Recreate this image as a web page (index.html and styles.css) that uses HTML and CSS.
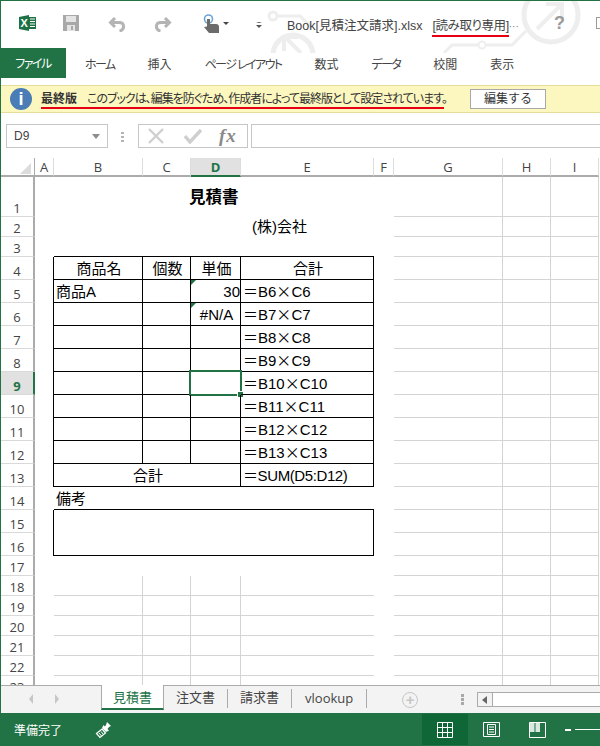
FILE: index.html
```html
<!DOCTYPE html>
<html lang="ja">
<head>
    <meta charset="UTF-8">
    <title>Book[見積注文請求].xlsx</title>
    <link rel="stylesheet" href="styles.css">
</head>
<body>
<div class="app">

    <!-- title bar -->
    <div class="titlebar">
        <svg class="watermark" width="600" height="52" viewBox="0 0 600 52" fill="none" stroke="#eeeeee" stroke-width="3">
            <circle cx="551" cy="14" r="27" stroke-width="5"/>
            <path d="M537 28 L561 4 M546 3 H562 V19" stroke-width="4"/>
            <path d="M526 30 L512 44 H486 M478 44 H452 L444 52"/>
            <circle cx="482" cy="44" r="3.5" stroke-width="2"/>
            <circle cx="293" cy="54" r="20" stroke-width="5"/>
            <path d="M301 52 L285 36 M284 50 V36 H298" stroke-width="4"/>
            <circle cx="273" cy="15" r="4"/>
            <path d="M277 15 H300 L312 27"/>
        </svg>
        <svg class="qat-icon xl" width="17" height="16" viewBox="0 0 17 16">
            <path d="M0 2 L10 0 V16 L0 14 Z" fill="#1e7145"/>
            <rect x="10" y="2" width="7" height="12" fill="#1e7145"/>
            <path d="M11 4 H16 M11 6.5 H16 M11 9 H16 M11 11.5 H16" stroke="#fff" stroke-width="1"/>
            <text x="1.5" y="12" class="xl-letter">X</text>
        </svg>
        <svg class="qat-icon save" width="16" height="16" viewBox="0 0 16 16">
            <path d="M0 0 H16 V16 H0 Z" fill="#a8a8a8"/>
            <rect x="3" y="1" width="10" height="6" fill="#e4e4e4"/>
            <rect x="4" y="10" width="8" height="6" fill="#e4e4e4"/>
            <rect x="8" y="11" width="2" height="4" fill="#a8a8a8"/>
        </svg>
        <svg class="qat-icon undo" width="18" height="16" viewBox="0 0 18 16" fill="none" stroke="#b4b4b4" stroke-width="3">
            <path d="M7 2 L2.5 6.5 L7 11"/>
            <path d="M3 6.5 H11 C17 6.5 17 14 11.5 15"/>
        </svg>
        <svg class="qat-icon redo" width="18" height="16" viewBox="0 0 18 16" fill="none" stroke="#b4b4b4" stroke-width="3">
            <path d="M11 2 L15.5 6.5 L11 11"/>
            <path d="M15 6.5 H7 C1 6.5 1 14 6.5 15"/>
        </svg>
        <svg class="qat-icon touch" width="18" height="19" viewBox="0 0 18 19">
            <circle cx="5.5" cy="5" r="4" fill="none" stroke="#6fa3d8" stroke-width="1.6"/>
            <path d="M4 5 H7 V10 H13 C15 10 16 11 16 13 V19 H6 L1 13 L4 12.5 Z" fill="#6b6b6b"/>
        </svg>
        <span class="caret"></span>
        <span class="customize"></span>
        <div class="doc-title">Book[見積注文請求].xlsx&nbsp;&nbsp;<span class="readonly">[読み取り専用]</span><span class="more">···</span></div>
        <span class="help">?</span>
        <span class="ribbon-opt"></span>
    </div>

    <!-- ribbon tabs -->
    <div class="tabs">
        <div class="tab-file">ファイル</div>
        <div class="tab-list">
            <span class="kana">ホーム</span>
            <span>挿入</span>
            <span class="kana">ページ レイアウト</span>
            <span>数式</span>
            <span class="kana">データ</span>
            <span>校閲</span>
            <span>表示</span>
        </div>
    </div>

    <!-- message bar -->
    <div class="msgbar">
        <span class="info-icon">i</span>
        <div class="msg-text"><b>最終版</b><span class="msg-body">このブックは、編集を防ぐため、作成者によって最終版として設定されています。</span></div>
        <div class="msg-btn">編集する</div>
    </div>

    <!-- formula bar -->
    <div class="formulabar">
        <div class="namebox"><span>D9</span><i class="name-caret"></i></div>
        <div class="fb-dots"></div>
        <div class="fb-buttons">
            <svg width="16" height="16" viewBox="0 0 16 16" fill="none" stroke="#cfcfcf" stroke-width="2.4"><path d="M1 1 L15 15 M15 1 L1 15"/></svg>
            <svg width="18" height="16" viewBox="0 0 18 16" fill="none" stroke="#cfcfcf" stroke-width="3.4"><path d="M1 8 L6 14 L17 2"/></svg>
            <span class="fx">fx</span>
        </div>
        <div class="fb-input"></div>
    </div>

    <!-- sheet -->
    <div class="sheet">
        <table class="grid">
            <colgroup>
                <col class="w-rh"><col class="w-a"><col class="w-b"><col class="w-c"><col class="w-d"><col class="w-e"><col class="w-f"><col class="w-g"><col class="w-h"><col class="w-i">
            </colgroup>
            <tr class="col-head">
                <th class="corner"><i></i></th><th>A</th><th>B</th><th>C</th><th class="sel">D</th><th>E</th><th>F</th><th>G</th><th>H</th><th>I</th>
            </tr>
            <tr class="r40"><th class="rh">1</th><td></td><td></td><td></td><td class="title">見積書</td><td></td><td></td><td class="g"></td><td class="g"></td><td class="g"></td></tr>
            <tr class="r20"><th class="rh">2</th><td></td><td></td><td></td><td></td><td class="company">(株)会社</td><td></td><td class="g"></td><td class="g"></td><td class="g"></td></tr>
            <tr class="r20"><th class="rh">3</th><td></td><td class="u"></td><td class="u"></td><td class="u"></td><td class="u"></td><td></td><td class="g"></td><td class="g"></td><td class="g"></td></tr>
            <tr class="r23"><th class="rh">4</th><td class="e"></td><td class="c mid">商品名</td><td class="c mid">個数</td><td class="c mid">単価</td><td class="c mid">合計</td><td></td><td class="g"></td><td class="g"></td><td class="g"></td></tr>
            <tr class="r23"><th class="rh">5</th><td class="e"></td><td class="c">商品A</td><td class="c"></td><td class="c num"><i class="flag"></i>30</td><td class="c">＝B6<span class="op">×</span>C6</td><td></td><td class="g"></td><td class="g"></td><td class="g"></td></tr>
            <tr class="r23"><th class="rh">6</th><td class="e"></td><td class="c"></td><td class="c"></td><td class="c mid"><i class="flag"></i>#N/A</td><td class="c">＝B7<span class="op">×</span>C7</td><td></td><td class="g"></td><td class="g"></td><td class="g"></td></tr>
            <tr class="r23"><th class="rh">7</th><td class="e"></td><td class="c"></td><td class="c"></td><td class="c"></td><td class="c">＝B8<span class="op">×</span>C8</td><td></td><td class="g"></td><td class="g"></td><td class="g"></td></tr>
            <tr class="r23"><th class="rh">8</th><td class="e"></td><td class="c"></td><td class="c"></td><td class="c"></td><td class="c">＝B9<span class="op">×</span>C9</td><td></td><td class="g"></td><td class="g"></td><td class="g"></td></tr>
            <tr class="r23"><th class="rh active">9</th><td class="e"></td><td class="c"></td><td class="c"></td><td class="c current"><i class="selection"></i><i class="handle"></i></td><td class="c">＝B10<span class="op">×</span>C10</td><td></td><td class="g"></td><td class="g"></td><td class="g"></td></tr>
            <tr class="r23"><th class="rh">10</th><td class="e"></td><td class="c"></td><td class="c"></td><td class="c"></td><td class="c">＝B11<span class="op">×</span>C11</td><td></td><td class="g"></td><td class="g"></td><td class="g"></td></tr>
            <tr class="r23"><th class="rh">11</th><td class="e"></td><td class="c"></td><td class="c"></td><td class="c"></td><td class="c">＝B12<span class="op">×</span>C12</td><td></td><td class="g"></td><td class="g"></td><td class="g"></td></tr>
            <tr class="r23"><th class="rh">12</th><td class="e"></td><td class="c"></td><td class="c"></td><td class="c"></td><td class="c">＝B13<span class="op">×</span>C13</td><td></td><td class="g"></td><td class="g"></td><td class="g"></td></tr>
            <tr class="r23"><th class="rh">13</th><td class="e"></td><td class="c mid" colspan="3">合計</td><td class="c sum">＝SUM(D5:D12)</td><td></td><td class="g"></td><td class="g"></td><td class="g"></td></tr>
            <tr class="r23"><th class="rh">14</th><td></td><td class="u">備考</td><td class="u"></td><td class="u"></td><td class="u"></td><td></td><td class="g"></td><td class="g"></td><td class="g"></td></tr>
            <tr class="r23"><th class="rh">15</th><td class="e"></td><td class="c" colspan="4" rowspan="2"></td><td></td><td class="g"></td><td class="g"></td><td class="g"></td></tr>
            <tr class="r23"><th class="rh">16</th><td class="e"></td><td></td><td class="g"></td><td class="g"></td><td class="g"></td></tr>
            <tr class="r20"><th class="rh">17</th><td></td><td></td><td></td><td></td><td></td><td></td><td class="g"></td><td class="g"></td><td class="g"></td></tr>
            <tr class="r20"><th class="rh">18</th><td></td><td class="l"></td><td class="l"></td><td class="l"></td><td class="lb"></td><td></td><td class="g"></td><td class="g"></td><td class="g"></td></tr>
            <tr class="r20"><th class="rh">19</th><td></td><td class="l"></td><td class="l"></td><td class="l"></td><td class="lb"></td><td></td><td class="g"></td><td class="g"></td><td class="g"></td></tr>
            <tr class="r20"><th class="rh">20</th><td></td><td class="l"></td><td class="l"></td><td class="l"></td><td class="lb"></td><td></td><td class="g"></td><td class="g"></td><td class="g"></td></tr>
            <tr class="r20"><th class="rh">21</th><td></td><td class="l"></td><td class="l"></td><td class="l"></td><td class="lb"></td><td></td><td class="g"></td><td class="g"></td><td class="g"></td></tr>
            <tr class="r20"><th class="rh">22</th><td></td><td class="l"></td><td class="l"></td><td class="l"></td><td class="lb"></td><td></td><td class="g"></td><td class="g"></td><td class="g"></td></tr>
            <tr class="r20"><th class="rh">23</th><td></td><td class="l"></td><td class="l"></td><td class="l"></td><td class="lb"></td><td></td><td class="g"></td><td class="g"></td><td class="g"></td></tr>
        </table>
    </div>

    <!-- sheet tabs -->
    <div class="sheetbar">
        <div class="sheet-nav"><i class="nav-l"></i><i class="nav-r"></i></div>
        <div class="sheet-tab on">見積書</div>
        <div class="sheet-tab">注文書</div>
        <div class="sheet-tab">請求書</div>
        <div class="sheet-tab latin">vlookup</div>
        <div class="add-sheet">+</div>
        <div class="bar-dots"></div>
        <div class="hscroll"><span class="hscroll-btn"><i></i></span></div>
    </div>

    <!-- status bar -->
    <div class="statusbar">
        <span class="ready">準備完了</span>
        <svg class="macro" width="18" height="18" viewBox="0 0 18 18">
            <path d="M12 1 L16 5 L14 6 L12.5 8 L14 9.5 L11 11 L7 7 L8.5 4 L10 5.5 L11 4 Z" fill="#fff"/>
            <path d="M1.5 12.5 L7 8 L10.5 12 L5 16.5 Z" fill="#217346" stroke="#fff" stroke-width="1.2"/>
            <path d="M4 12 L6.5 15 M6 10.5 L8.5 13.5" stroke="#fff" stroke-width="1"/>
        </svg>
        <div class="views">
            <div class="view on">
                <svg width="16" height="16" viewBox="0 0 16 16" fill="none" stroke="#fff"><path d="M.5 .5 H15.5 V15.5 H.5 Z M5.5 .5 V15.5 M10.5 .5 V15.5 M.5 5.5 H15.5 M.5 10.5 H15.5"/></svg>
            </div>
            <div class="view">
                <svg width="17" height="15" viewBox="0 0 17 15" fill="none" stroke="#fff"><path d="M.5 .5 H16.5 V14.5 H.5 Z M4.5 2.5 H12.5 V12.5 H4.5 Z M6 5 H11 M6 7.5 H11 M6 10 H11"/></svg>
            </div>
            <div class="view">
                <svg width="17" height="16" viewBox="0 0 17 16"><path d="M.5 .5 H16.5 V15.5 H.5 Z" fill="none" stroke="#fff"/><path d="M1 1 H5.5 V10 H1 Z M6.5 1 H11 V10 H6.5 Z" fill="#d9e9df"/></svg>
            </div>
        </div>
        <div class="zoomer"><i class="minus"></i><i class="track"></i></div>
    </div>
</div>
</body>
</html>
```

FILE: styles.css
```css
* {
    box-sizing: border-box;
}
html, body {
    margin: 0;
    padding: 0;
}
body {
    width: 600px;
    height: 746px;
    overflow: hidden;
    background: #fff;
    font-family: "Liberation Sans", "Noto Sans CJK JP", sans-serif;
    color: #222;
}
.app {
    width: 600px;
    height: 746px;
    display: flex;
    flex-direction: column;
    border-top: 1px solid #217346;
    border-left: 1px solid #217346;
    overflow: hidden;
}

/* title bar */
.titlebar {
    position: relative;
    height: 47px;
    flex: none;
    display: flex;
    align-items: center;
    font-size: 13px;
}
.watermark {
    position: absolute;
    left: -1px;
    top: 0;
}
.titlebar > *:not(.watermark) {
    position: relative;
}
.qat-icon {
    flex: none;
}
.xl {
    margin-left: 18px;
    margin-top: -4px;
}
.xl-letter {
    font: bold 11px "Liberation Sans", sans-serif;
    fill: #fff;
}
.save {
    margin-left: 27px;
    margin-top: -3px;
}
.undo {
    margin-left: 29px;
    margin-top: -1px;
}
.redo {
    margin-left: 28px;
    margin-top: -1px;
}
.touch {
    margin-left: 31px;
    margin-top: -3px;
}
.caret {
    width: 0;
    height: 0;
    margin-left: 2px;
    margin-top: -3px;
    border: 3px solid transparent;
    border-top: 3px solid #444;
    border-bottom: 0;
}
.customize {
    width: 6px;
    height: 5px;
    margin-left: 27px;
    margin-top: -1px;
    border-top: 1px solid #555;
    border-left: 3px solid transparent;
    border-right: 3px solid transparent;
}
.customize::after {
    content: "";
    display: block;
    width: 0;
    height: 0;
    margin: 2px 0 0 -3px;
    border: 3px solid transparent;
    border-top: 3px solid #555;
    border-bottom: 0;
}
.doc-title {
    margin-left: 25px;
    font-size: 12.5px;
    color: #444;
    white-space: nowrap;
    width: 238px;
    margin-top: 3px;
    font-feature-settings: "palt";
}
.readonly {
    display: inline-block;
    margin-left: 3px;
    border-bottom: 2px solid #e60012;
    line-height: 17px;
    letter-spacing: -0.4px;
}
.more {
    color: #777;
    font-size: 10px;
}
.help {
    margin-left: 30px;
    font: bold 18px "Liberation Sans", sans-serif;
    color: #9a9a9a;
    margin-top: -2px;
}
.ribbon-opt {
    margin-left: 31px;
    width: 4px;
    height: 12px;
    border: 1px solid #999;
    border-right: 0;
    margin-top: -3px;
}

/* ribbon tabs */
.tabs {
    height: 30px;
    flex: none;
    display: flex;
    align-items: center;
    position: relative;
    margin-left: -1px;
    font-size: 12px;
    font-feature-settings: "palt";
}
.tab-file {
    width: 66px;
    height: 30px;
    line-height: 32px;
    text-align: center;
    background: #217346;
    color: #fff;
    letter-spacing: -1.5px;
}
.tab-list {
    display: flex;
    gap: 33px;
    margin-left: 19px;
    color: #444;
}
.kana {
    letter-spacing: -1.6px;
}

/* message bar */
.msgbar {
    height: 28px;
    flex: none;
    margin: 7px 0 0 -1px;
    display: flex;
    align-items: center;
    background: #fcf7bf;
    border-top: 1px solid #e7dd9b;
    border-bottom: 1px solid #e7dd9b;
    font-size: 12px;
    color: #333;
}
.info-icon {
    width: 22px;
    height: 22px;
    margin-left: 10px;
    border-radius: 50%;
    background: #4a7db5;
    color: #fff;
    font: bold 18px/22px "Liberation Sans", sans-serif;
    text-align: center;
}
.msg-text {
    margin-left: 9px;
    border-bottom: 2px solid #e60012;
    line-height: 15px;
    white-space: nowrap;
    width: 403px;
    margin-top: 2px;
    font-feature-settings: "palt";
}
.msg-body {
    margin-left: 10px;
    letter-spacing: -1px;
}
.msg-btn {
    width: 76px;
    height: 20px;
    margin-left: 26px;
    background: #fff;
    border: 1px solid #a9a9a9;
    line-height: 18px;
    text-align: center;
}

/* formula bar */
.formulabar {
    height: 24px;
    flex: none;
    margin-top: 11px;
    display: flex;
    align-items: stretch;
    font-size: 12px;
}
.namebox {
    width: 102px;
    margin-left: 5px;
    padding: 0 7px;
    border: 1px solid #c6c6c6;
    display: flex;
    align-items: center;
    justify-content: space-between;
    color: #444;
}
.name-caret {
    border: 4px solid transparent;
    border-top: 5px solid #8c8c8c;
    border-bottom: 0;
}
.fb-dots {
    width: 3px;
    height: 10px;
    margin: 8px 14px 0 13px;
    background: repeating-linear-gradient(#b4b4b4 0 2px, transparent 2px 4px);
}
.fb-buttons {
    width: 110px;
    border: 1px solid #c6c6c6;
    display: flex;
    align-items: center;
    gap: 20px;
    padding-left: 9px;
}
.fx {
    font: italic bold 19px "Liberation Serif", serif;
    color: #8a8a8a;
    margin-left: -3px;
    letter-spacing: 1px;
}
.fb-input {
    flex: 1;
    margin-left: 3px;
    border: 1px solid #c6c6c6;
    border-right: 0;
}

/* sheet */
.sheet {
    flex: none;
    height: 527px;
    margin-top: 10px;
    overflow: hidden;
    font-size: 15px;
    color: #000;
}
.grid {
    border-collapse: separate;
    border-spacing: 0;
    table-layout: fixed;
    width: 598px;
}
.w-rh { width: 34px; }
.w-a { width: 19px; }
.w-b { width: 89px; }
.w-c { width: 48px; }
.w-d { width: 50px; }
.w-e { width: 133px; }
.w-f { width: 20px; }
.w-g { width: 109px; }
.w-h { width: 48px; }
.w-i { width: 48px; }
.grid td, .grid th {
    padding: 0;
    overflow: visible;
    white-space: nowrap;
    font-weight: normal;
}
.grid td {
    vertical-align: bottom;
    line-height: 20px;
    padding-left: 2px;
}
.col-head { height: 19px; }
.r40 { height: 40px; }
.r20 { height: 20px; }
.r23 { height: 23px; }
.col-head th {
    border-bottom: 2px solid #ababab;
    border-right: 1px solid #dcdcdc;
    font: 13px/16px "Open Sans", sans-serif;
    color: #444;
    vertical-align: middle;
}
.col-head th.sel {
    background: #e1e1e1;
    border-bottom-color: #217346;
    color: #217346;
    font-weight: 700;
}
.col-head th.corner {
    border-right: 1px solid #ababab;
    position: relative;
}
.corner i {
    position: absolute;
    right: 3px;
    bottom: 1px;
    border-style: solid;
    border-width: 0 0 11px 11px;
    border-color: transparent transparent #dcdcdc transparent;
}
.rh {
    border-right: 2px solid #ababab;
    border-bottom: 1px solid #d9d9d9;
    font: 13px/16px "Open Sans", sans-serif !important;
    color: #444;
    text-align: center;
    vertical-align: bottom;
}
.rh.active {
    background: #e1e1e1;
    border-right-color: #217346;
    color: #217346;
    font-weight: 700 !important;
}
.g, .l {
    border-right: 1px solid #d4d4d4;
    border-bottom: 1px solid #d4d4d4;
}
.lb {
    border-bottom: 1px solid #d4d4d4;
}
.e {
    border-right: 1px solid #000;
}
.c {
    border-right: 1px solid #000;
    border-bottom: 1px solid #000;
    position: relative;
}
.u {
    border-bottom: 1px solid #000;
}
.grid td.mid {
    text-align: center;
    padding-top: 1px;
}
.num {
    text-align: right;
}
.sum {
    letter-spacing: -0.4px;
}
.op {
    font-family: "Noto Sans CJK JP", sans-serif;
}
.grid td.title {
    font-weight: bold;
    font-size: 16.5px;
    padding: 0 0 10px 0;
    text-indent: -2px;
}
.grid td.company {
    padding-left: 11px;
}
.flag {
    position: absolute;
    left: 0;
    top: 0;
    border-style: solid;
    border-width: 5px 5px 0 0;
    border-color: #217346 transparent transparent transparent;
}
.selection {
    position: absolute;
    left: -2px;
    top: -2px;
    right: -2px;
    bottom: -2px;
    border: 2px solid #217346;
}
.handle {
    position: absolute;
    right: -3px;
    bottom: -3px;
    width: 5px;
    height: 5px;
    background: #217346;
    outline: 1px solid #fff;
}

/* sheet tabs */
.sheetbar {
    flex: none;
    height: 28px;
    display: flex;
    background: #f3f3f3;
    border-top: 1px solid #ababab;
    font-size: 13px;
    color: #444;
    align-items: flex-start;
    position: relative;
}
.sheetbar > * {
    flex: none;
}
.sheet-nav {
    width: 100px;
    height: 27px;
    display: flex;
    gap: 22px;
    padding: 8px 0 0 28px;
}
.nav-l {
    border: 5px solid transparent;
    border-right: 4px solid #c6c6c6;
    border-left: 0;
    height: 10px;
}
.nav-r {
    border: 5px solid transparent;
    border-left: 4px solid #c6c6c6;
    border-right: 0;
    height: 10px;
}
.sheet-tab {
    height: 19px;
    margin-top: 3px;
    line-height: 18px;
    text-align: center;
    border-right: 1px solid #ababab;
    padding: 0 12px;
    white-space: nowrap;
}
.sheet-tab.on {
    width: 63px;
    height: 25px;
    margin-top: -1px;
    padding: 3px 0 0 0;
    line-height: 20px;
    background: #fff;
    color: #217346;
    border-left: 1px solid #ababab;
    border-right: 1px solid #ababab;
    border-bottom: 2px solid #217346;
}
.sheet-tab.latin {
    font-family: "Open Sans", sans-serif;
    font-size: 13px;
    padding: 0 13px;
}
.add-sheet {
    width: 16px;
    height: 16px;
    margin: 6px 0 0 35px;
    border: 1px solid #c6c6c6;
    border-radius: 50%;
    color: #c6c6c6;
    font: bold 15px/13px "Liberation Sans", sans-serif;
    text-align: center;
}
.bar-dots {
    width: 3px;
    height: 11px;
    margin: 8px 0 0 43px;
    background: repeating-linear-gradient(#a8a8a8 0 3px, transparent 3px 4px);
}
.hscroll {
    width: 200px;
    height: 15px;
    margin: 6px 0 0 13px;
    background: #fff;
    border: 1px solid #ababab;
    border-right: 0;
}
.hscroll-btn {
    display: block;
    width: 15px;
    height: 13px;
    background: #f3f3f3;
    border-right: 1px solid #ababab;
    padding: 3px 0 0 4px;
}
.hscroll-btn i {
    display: block;
    width: 0;
    border: 4px solid transparent;
    border-right: 5px solid #666;
    border-left: 0;
}

/* status bar */
.statusbar {
    flex: 1;
    margin-left: -1px;
    background: #217346;
    color: #fff;
    font-size: 12px;
    display: flex;
    align-items: center;
}
.statusbar > * {
    flex: none;
}
.ready {
    margin-left: 14px;
    width: 48px;
    white-space: nowrap;
}
.macro {
    margin-left: 33px;
}
.views {
    display: flex;
    align-self: stretch;
    margin-left: 309px;
    padding: 1px 0;
}
.view {
    width: 46px;
    display: flex;
    align-items: center;
    justify-content: center;
}
.view.on {
    background: #0f6636;
}
.zoomer {
    display: flex;
    align-items: center;
    gap: 4px;
    margin-left: 5px;
}
.minus {
    width: 6px;
    height: 2px;
    background: #fff;
}
.track {
    width: 30px;
    height: 1px;
    background: #fff;
}
```
